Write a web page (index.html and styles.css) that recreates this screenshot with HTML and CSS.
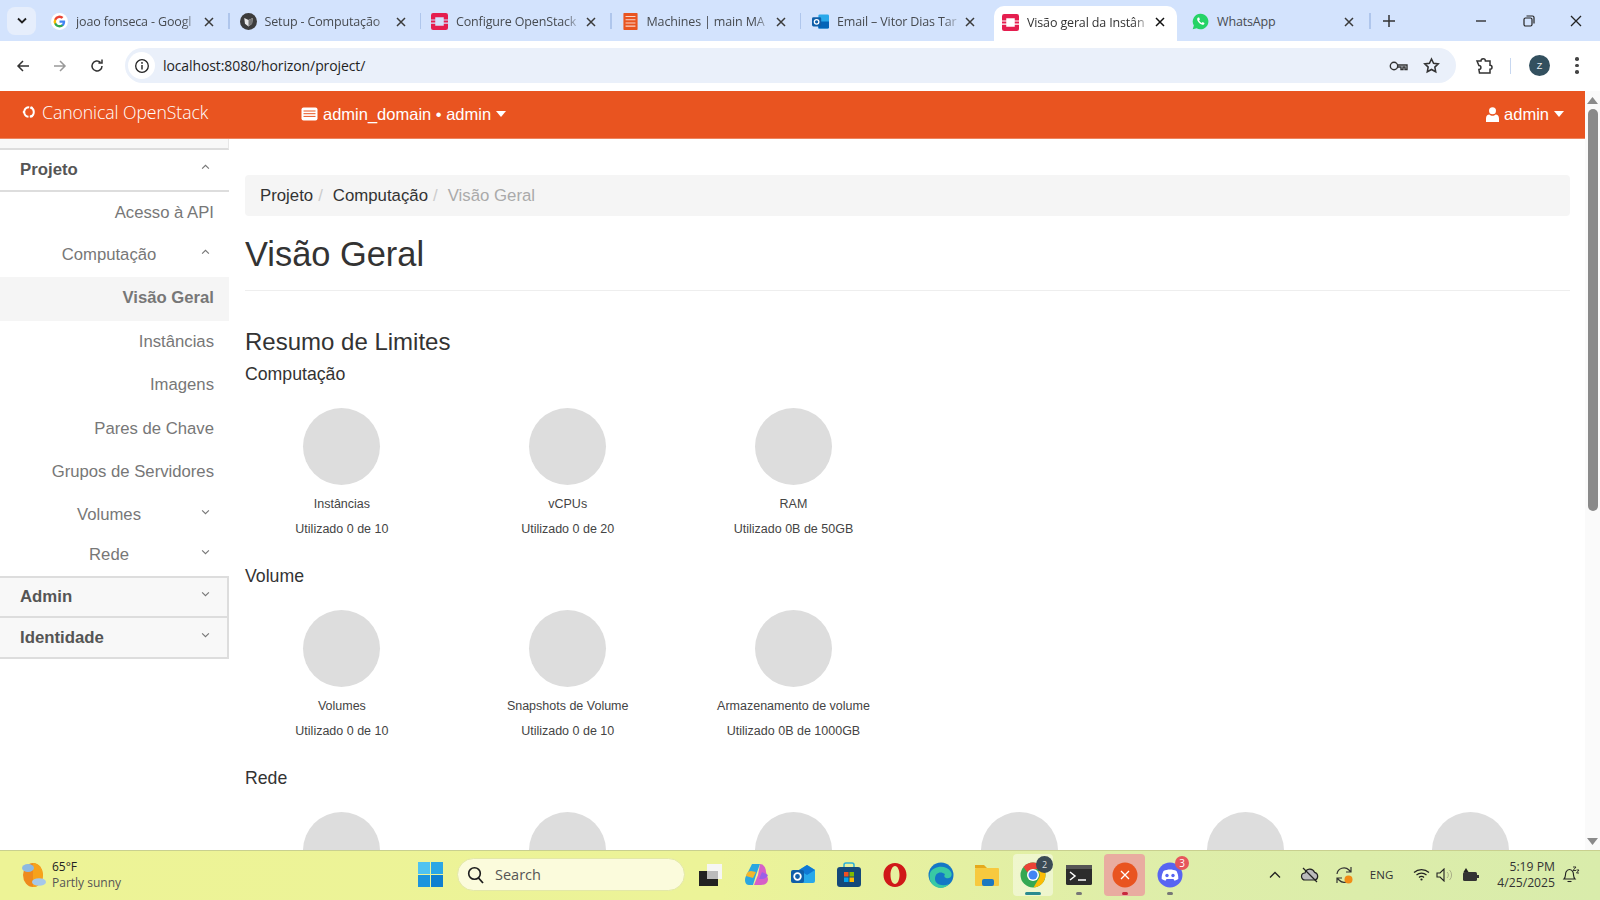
FILE: index.html
```html
<!DOCTYPE html>
<html lang="pt">
<head>
<meta charset="utf-8">
<title>Visão geral da Instância</title>
<link rel="stylesheet" href="styles.css">
</head>
<body>
<div class="tabstrip">
  <div class="tabsearch"><svg width="12" height="8" viewBox="0 0 12 8"><path d="M2 1.500l4 4 4-4" fill="none" stroke="#1f1f1f" stroke-width="1.800"/></svg></div>
  <div class="tab t1">
    <svg class="fav" viewBox="0 0 24 24"><circle cx="12" cy="12" r="12" fill="#fff"/><path d="M20 12.200c0-.6 0-1.100-.1-1.600H12v3h4.500a3.900 3.900 0 0 1-1.700 2.500v2.100h2.700c1.600-1.500 2.500-3.600 2.500-6z" fill="#4285f4"/><path d="M12 20.300c2.200 0 4.100-.7 5.500-2l-2.700-2.100c-.7.500-1.700.8-2.800.8-2.200 0-4-1.500-4.600-3.400H4.600v2.100a8.300 8.300 0 0 0 7.400 4.600z" fill="#34a853"/><path d="M7.400 13.600a5 5 0 0 1 0-3.200V8.300H4.600a8.300 8.300 0 0 0 0 7.400z" fill="#fbbc05"/><path d="M12 7c1.200 0 2.300.4 3.200 1.200l2.400-2.400A8.300 8.300 0 0 0 4.600 8.300l2.800 2.100C8 8.500 9.800 7 12 7z" fill="#ea4335"/></svg>
    <span class="tabtext">joao fonseca - Googl</span><svg class="x" viewBox="0 0 12 12"><path d="M2 2l8 8M10 2l-8 8"/></svg>
  </div><i class="sep"></i>
  <div class="tab t2">
    <svg class="fav" viewBox="0 0 24 24"><circle cx="12" cy="12" r="12" fill="#3c3c3c"/><path d="M6 7l6 3 6-3-1 8-5 4-5-4z" fill="#e8e8e8"/><path d="M12 10v9l5-4 1-8z" fill="#777"/></svg>
    <span class="tabtext">Setup - Computação</span><svg class="x" viewBox="0 0 12 12"><path d="M2 2l8 8M10 2l-8 8"/></svg>
  </div><i class="sep"></i>
  <div class="tab t3">
    <svg class="fav" viewBox="0 0 24 24"><path class="osred" d="M3 0h18a3 3 0 0 1 3 3v6h-6V6H6v3H0V3a3 3 0 0 1 3-3zM0 15h6v3h12v-3h6v6a3 3 0 0 1-3 3H3a3 3 0 0 1-3-3zM0 10.500h6v3H0zM18 10.500h6v3h-6z"/></svg>
    <span class="tabtext">Configure OpenStack</span><svg class="x" viewBox="0 0 12 12"><path d="M2 2l8 8M10 2l-8 8"/></svg>
  </div><i class="sep"></i>
  <div class="tab t4">
    <svg class="fav" viewBox="0 0 24 24"><rect x="2" width="20" height="24" rx="1" fill="#e95420"/><path d="M5 5h14M5 9.500h14M5 14h14M5 18.500h14" stroke="#fff" stroke-width="1.500" opacity=".75"/></svg>
    <span class="tabtext">Machines | main MA</span><svg class="x" viewBox="0 0 12 12"><path d="M2 2l8 8M10 2l-8 8"/></svg>
  </div><i class="sep"></i>
  <div class="tab t5">
    <svg class="fav" viewBox="0 0 24 24"><rect x="9" y="2" width="15" height="20" rx="2" fill="#28a8ea"/><path d="M9 12h15v8a2 2 0 0 1-2 2H9z" fill="#0364b8"/><rect y="6" width="13" height="13" rx="2" fill="#0f5ea8"/><circle cx="6.500" cy="12.500" r="3.200" fill="none" stroke="#fff" stroke-width="1.800"/></svg>
    <span class="tabtext">Email – Vitor Dias Tar</span><svg class="x" viewBox="0 0 12 12"><path d="M2 2l8 8M10 2l-8 8"/></svg>
  </div>
  <div class="tab active">
    <svg class="fav" viewBox="0 0 24 24"><path class="osred" d="M3 0h18a3 3 0 0 1 3 3v6h-6V6H6v3H0V3a3 3 0 0 1 3-3zM0 15h6v3h12v-3h6v6a3 3 0 0 1-3 3H3a3 3 0 0 1-3-3zM0 10.500h6v3H0zM18 10.500h6v3h-6z"/></svg>
    <span class="tabtext">Visão geral da Instân</span><svg class="x" viewBox="0 0 12 12"><path d="M2 2l8 8M10 2l-8 8"/></svg>
  </div>
  <div class="tab t7">
    <svg class="fav" viewBox="0 0 24 24"><path d="M12 1a11 11 0 0 0-9.400 16.600L1 23l5.600-1.500A11 11 0 1 0 12 1z" fill="#25d366"/><path d="M8.500 6.500c-1.500 1-1.800 3 0 5.500s4 4.200 6 4.500 3.300-1.200 3-2.500l-2.500-1.300-1.200 1.300c-1.500-.6-3-2-3.800-3.800l1.200-1.200-1-2.500z" fill="#fff"/></svg>
    <span class="tabtext plain">WhatsApp</span><svg class="x" viewBox="0 0 12 12"><path d="M2 2l8 8M10 2l-8 8"/></svg>
  </div><i class="sep"></i>
  <svg class="plus" width="14" height="14" viewBox="0 0 14 14"><path d="M7 1v12M1 7h12" stroke="#333" stroke-width="1.500"/></svg>
  <div class="winctl">
    <svg width="14" height="14" viewBox="0 0 14 14"><path d="M2 7h10" stroke="#222" stroke-width="1.300"/></svg>
    <svg width="14" height="14" viewBox="0 0 14 14"><rect x="2" y="4" width="8" height="8" rx="1.500" fill="none" stroke="#222" stroke-width="1.200"/><path d="M4.500 2h6a1.500 1.500 0 0 1 1.500 1.500v6" fill="none" stroke="#222" stroke-width="1.200"/></svg>
    <svg width="14" height="14" viewBox="0 0 14 14"><path d="M2 2l10 10M12 2L2 12" stroke="#222" stroke-width="1.300"/></svg>
  </div>
</div>
<div class="toolbar">
  <svg class="navico" viewBox="0 0 16 16"><path d="M14 8H3M8 3L3 8l5 5" fill="none" stroke="#333" stroke-width="1.500"/></svg>
  <svg class="navico" viewBox="0 0 16 16"><path d="M2 8h11M8 3l5 5-5 5" fill="none" stroke="#999" stroke-width="1.500"/></svg>
  <svg class="navico" viewBox="0 0 16 16"><path d="M13 8a5 5 0 1 1-1.600-3.700M13 1.500v3.600H9.400" fill="none" stroke="#333" stroke-width="1.500"/></svg>
  <div class="omnibox">
    <span class="infochip"><svg width="16" height="16" viewBox="0 0 16 16"><circle cx="8" cy="8" r="6.300" fill="none" stroke="#222" stroke-width="1.300"/><path d="M8 7v4.500" stroke="#222" stroke-width="1.400"/><circle cx="8" cy="4.900" r=".9" fill="#222"/></svg></span>
    <span class="url">localhost:8080/horizon/project/</span>
    <svg class="key" width="20" height="12" viewBox="0 0 20 12"><circle cx="5" cy="6" r="3.700" fill="none" stroke="#333" stroke-width="1.400"/><path d="M9 5h9v4.500h-2V7h-2v2.500h-2V7H9" fill="none" stroke="#333" stroke-width="1.400"/></svg>
    <svg class="star" width="17" height="17" viewBox="0 0 24 24"><path d="M12 2.800l2.900 6 6.600.9-4.800 4.600 1.200 6.500-5.900-3.200-5.900 3.200 1.200-6.500-4.800-4.600 6.600-.9z" fill="none" stroke="#333" stroke-width="2.200"/></svg>
  </div>
  <svg class="ext" width="20" height="20" viewBox="0 0 20 20"><path d="M3 5h4a2.200 2.200 0 0 1 4.400 0H16v4.300a2 2 0 0 1 0 4V17H5.500l-.6-3.500a2 2 0 0 0 0-4z" fill="none" stroke="#333" stroke-width="1.500"/></svg>
  <i class="tsep"></i>
  <span class="avatar">Z</span>
  <span class="dots"><i></i><i></i><i></i></span>
</div>
<div class="app">
  <div class="page">
    <nav class="topnav">
      <div class="brand"><svg width="14" height="14" viewBox="0 0 14 14"><circle cx="7" cy="7" r="4.800" fill="none" stroke="#fff" stroke-width="2" stroke-dasharray="6.500 1.400"/><circle cx="2" cy="7" r="1.300" fill="#fff"/><circle cx="9.500" cy="2.700" r="1.300" fill="#fff"/><circle cx="9.500" cy="11.300" r="1.300" fill="#fff"/></svg><span>Canonical OpenStack</span></div>
      <div class="project"><svg width="17" height="14" viewBox="0 0 17 14"><rect x=".5" y=".5" width="16" height="13" rx="2" fill="#fff"/><path d="M2.500 4h12M2.500 6.700h12M2.500 9.400h12" stroke="#e95420" stroke-width="1"/></svg><span>admin_domain • admin</span><i class="caret"></i></div>
      <div class="user"><svg width="13" height="15" viewBox="0 0 13 15"><circle cx="6.500" cy="3.800" r="3.500" fill="#fff"/><path d="M0 15v-3.500c0-2.500 1.500-4 3.300-4 1 .9 2 1.300 3.200 1.300s2.200-.4 3.200-1.300c1.800 0 3.300 1.500 3.300 4V15z" fill="#fff"/></svg><span>admin</span><i class="caret"></i></div>
    </nav>
    <div class="body">
      <aside class="side">
        <div class="side-top"></div>
        <div class="group open"><span>Projeto</span><svg class="chev" viewBox="0 0 8 5"><path d="M1 4l3-3 3 3"/></svg></div>
        <a class="item first">Acesso à API</a>
        <a class="item sub compute"><span>Computação</span><svg class="chev" viewBox="0 0 8 5"><path d="M1 4l3-3 3 3"/></svg></a>
        <a class="item current">Visão Geral</a>
        <a class="item">Instâncias</a>
        <a class="item">Imagens</a>
        <a class="item">Pares de Chave</a>
        <a class="item">Grupos de Servidores</a>
        <a class="item sub volumes"><span>Volumes</span><svg class="chev" viewBox="0 0 8 5"><path d="M1 1l3 3 3-3"/></svg></a>
        <a class="item sub rede"><span>Rede</span><svg class="chev" viewBox="0 0 8 5"><path d="M1 1l3 3 3-3"/></svg></a>
        <div class="group closed admin"><span>Admin</span><svg class="chev" viewBox="0 0 8 5"><path d="M1 1l3 3 3-3"/></svg></div>
        <div class="group closed"><span>Identidade</span><svg class="chev" viewBox="0 0 8 5"><path d="M1 1l3 3 3-3"/></svg></div>
      </aside>
      <main class="main">
        <ol class="crumbs"><li>Projeto</li><li>Computação</li><li class="here">Visão Geral</li></ol>
        <h1>Visão Geral</h1>
        <h2>Resumo de Limites</h2>
        <h3>Computação</h3>
        <div class="charts">
          <div class="chart"><div class="pie"></div><b>Instâncias</b><span>Utilizado 0 de 10</span></div>
          <div class="chart"><div class="pie"></div><b>vCPUs</b><span>Utilizado 0 de 20</span></div>
          <div class="chart"><div class="pie"></div><b>RAM</b><span>Utilizado 0B de 50GB</span></div>
        </div>
        <h3>Volume</h3>
        <div class="charts">
          <div class="chart"><div class="pie"></div><b>Volumes</b><span>Utilizado 0 de 10</span></div>
          <div class="chart"><div class="pie"></div><b>Snapshots de Volume</b><span>Utilizado 0 de 10</span></div>
          <div class="chart"><div class="pie"></div><b>Armazenamento de volume</b><span>Utilizado 0B de 1000GB</span></div>
        </div>
        <h3>Rede</h3>
        <div class="charts">
          <div class="chart"><div class="pie"></div></div>
          <div class="chart"><div class="pie"></div></div>
          <div class="chart"><div class="pie"></div></div>
          <div class="chart"><div class="pie"></div></div>
          <div class="chart"><div class="pie"></div></div>
          <div class="chart"><div class="pie"></div></div>
        </div>
      </main>
    </div>
  </div>
  <div class="scrollbar">
    <svg width="11" height="7" viewBox="0 0 11 7"><path d="M5.500 0L11 7H0z" fill="#8a8a8a"/></svg>
    <div class="thumb"></div>
    <div class="track"></div>
    <svg width="11" height="7" viewBox="0 0 11 7"><path d="M0 0h11L5.500 7z" fill="#8a8a8a"/></svg>
  </div>
</div>
<footer class="taskbar">
  <div class="weather">
    <svg width="28" height="26" viewBox="0 0 28 26"><ellipse cx="14" cy="13" rx="10" ry="12" fill="#ee8a1c"/><path d="M14 1a10 12 0 0 1 0 24z" fill="#f7a21a"/><ellipse cx="9" cy="6" rx="6" ry="4" fill="#8db9e2"/><ellipse cx="20" cy="20" rx="7" ry="3.800" fill="#a5c8ea"/></svg>
    <div class="wtext"><b>65°F</b><span>Partly sunny</span></div>
  </div>
  <div class="center">
    <svg class="win" width="25" height="25" viewBox="0 0 25 25"><rect width="12" height="12" fill="#4fc3f0"/><rect x="13" width="12" height="12" fill="#2ba7e6"/><rect y="13" width="12" height="12" fill="#1c95dd"/><rect x="13" y="13" width="12" height="12" fill="#0f7fd0"/></svg>
    <div class="search"><svg width="18" height="18" viewBox="0 0 18 18"><circle cx="7.500" cy="7.500" r="5.800" fill="none" stroke="#1c1c1c" stroke-width="1.600"/><path d="M11.500 12l4.500 5" stroke="#1c1c1c" stroke-width="1.800"/></svg><span>Search</span></div>
    <div class="tbicons">
      <span class="tbi"><svg width="26" height="26" viewBox="0 0 26 26"><rect x="9" y="2" width="15" height="15" fill="#f6f6f4"/><rect x="1" y="9" width="19" height="15" fill="#222"/><rect x="9" y="9" width="11" height="8" fill="#bbb"/></svg></span>
      <span class="tbi"><svg width="26" height="26" viewBox="0 0 26 26"><path d="M8 2h8l-4 11-3 10H5C1 23 0 18 2 14z" fill="#2aa7e0"/><path d="M16 2c4 0 6 4 6 8l2 7c0 4-3 6-7 6h-7l4-10z" fill="#d65fc7"/><path d="M7 9c-3 0-5 3-5 5l7 2 3-6z" fill="#f2b62c"/><path d="M18 17c3 0 5-2 6-4l-6-3-3 7z" fill="#9a5fe8"/></svg></span>
      <span class="tbi"><svg width="26" height="26" viewBox="0 0 26 26"><path d="M9 8l8-5 8 5v11a2 2 0 0 1-2 2H9z" fill="#28a8ea"/><path d="M9 8l8-5 8 5-8 5z" fill="#0f78d4"/><rect x="1" y="8" width="13" height="13" rx="2" fill="#0f5ea8"/><circle cx="7.500" cy="14.500" r="3.300" fill="none" stroke="#fff" stroke-width="1.800"/></svg></span>
      <span class="tbi"><svg width="26" height="26" viewBox="0 0 26 26"><path d="M8 5V3a2 2 0 0 1 2-2h6a2 2 0 0 1 2 2v2" fill="none" stroke="#2bb1d9" stroke-width="1.500"/><rect x="1" y="5" width="24" height="20" rx="3" fill="#14497a"/><rect x="8" y="10" width="4.500" height="4.500" fill="#f25022"/><rect x="13.500" y="10" width="4.500" height="4.500" fill="#7fba00"/><rect x="8" y="15.500" width="4.500" height="4.500" fill="#00a4ef"/><rect x="13.500" y="15.500" width="4.500" height="4.500" fill="#ffb900"/></svg></span>
      <span class="tbi"><svg width="26" height="26" viewBox="0 0 26 26"><path fill-rule="evenodd" d="M13 1c6.500 0 11.500 5.400 11.500 12S19.500 25 13 25 1.500 19.600 1.500 13 6.500 1 13 1zm0 3c-2.600 0-4.500 4-4.500 9s1.900 9 4.500 9 4.500-4 4.500-9-1.900-9-4.500-9z" fill="#d01818"/></svg></span>
      <span class="tbi"><svg width="26" height="26" viewBox="0 0 26 26"><circle cx="13" cy="13" r="12.500" fill="#1477c6"/><path d="M2 11C5 4 18 2 23 10c2 4-1 7-5 6-3-1-1-4-1-4-4-3-10-2-10 5 0 5 7 8 14 5-5 6-13 4-16 1-3-3-4-7-3-12z" fill="#38c9a4"/></svg></span>
      <span class="tbi"><svg width="26" height="26" viewBox="0 0 26 26"><path d="M1 3h9l3 3h-12z" fill="#e5a91c"/><rect x="1" y="6" width="24" height="18" rx="1" fill="#f7c93e"/><rect x="8" y="17" width="12" height="7" rx="2" fill="#1c78c0"/></svg></span>
      <span class="tbi chrome"><svg width="26" height="26" viewBox="0 0 26 26"><circle cx="13" cy="13" r="12.500" fill="#34a853"/><path d="M13 .5A12.500 12.500 0 0 1 24 7H13a6 6 0 0 0-5.500 3.500L3.500 5A12.500 12.500 0 0 1 13 .5z" fill="#ea4335"/><path d="M24 7a12.500 12.500 0 0 1-10.500 18.500L18.500 17A6 6 0 0 0 18 9z" fill="#fbbc05"/><circle cx="13" cy="13" r="6" fill="#fff"/><circle cx="13" cy="13" r="4.500" fill="#4285f4"/></svg><em class="zbadge">2</em><i class="run long"></i></span>
      <span class="tbi"><svg width="26" height="22" viewBox="0 0 26 22"><rect y="1" width="26" height="20" rx="1.500" fill="#2c2c2c"/><rect y="1" width="26" height="4" fill="#555"/><path d="M4 8l5 4-5 4" fill="none" stroke="#fff" stroke-width="1.500"/><path d="M12 16h8" stroke="#fff" stroke-width="1.500"/></svg><i class="run"></i></span>
      <span class="tbi vbox"><svg width="26" height="26" viewBox="0 0 26 26"><circle cx="13" cy="13" r="12.500" fill="#e95420"/><path d="M9 9l8 8M17 9l-8 8" stroke="#fff" stroke-width="1.300"/></svg><i class="run red"></i></span>
      <span class="tbi"><svg width="26" height="26" viewBox="0 0 26 26"><circle cx="13" cy="13" r="12.500" fill="#5865f2"/><path d="M6.500 9c4-2 9-2 13 0 1.300 2.500 2 5 1.800 8-1.200.9-2.500 1.400-3.800 1.800l-1-1.800h-7l-1 1.800c-1.300-.4-2.600-.9-3.800-1.800-.2-3 .5-5.500 1.800-8z" fill="#fff"/><circle cx="10" cy="13.500" r="1.700" fill="#5865f2"/><circle cx="16" cy="13.500" r="1.700" fill="#5865f2"/></svg><em class="rbadge">3</em><i class="run"></i></span>
    </div>
  </div>
  <div class="tray">
    <svg width="14" height="9" viewBox="0 0 14 9"><path d="M2 7.500l5-5 5 5" fill="none" stroke="#222" stroke-width="1.300"/></svg>
    <svg class="tr-cloud" width="20" height="16" viewBox="0 0 20 16"><path d="M5 13a3.500 3.500 0 0 1 0-7 5 5 0 0 1 9.500-.7A4 4 0 0 1 15 13z" fill="#bbb" stroke="#222" stroke-width="1.200"/><path d="M3 1l14 14" stroke="#222" stroke-width="1.300"/></svg>
    <span class="tr-sync"><svg width="20" height="20" viewBox="0 0 20 20"><path d="M3 9a7 7 0 0 1 12-4l2 2M17 2v5h-5M17 12a7 7 0 0 1-12 3l-2-2M3 18v-5h5" fill="none" stroke="#333" stroke-width="1.200"/><circle cx="14.500" cy="14.500" r="4" fill="#f28c16"/></svg></span>
    <span class="eng">ENG</span>
    <svg class="tr-wifi" width="17" height="13" viewBox="0 0 17 13"><path d="M1 4.500a11 11 0 0 1 15 0M3.500 7a7.500 7.500 0 0 1 10 0M6 9.500a3.500 3.500 0 0 1 5 0" fill="none" stroke="#222" stroke-width="1.200"/><circle cx="8.500" cy="11.500" r="1.100" fill="#222"/></svg>
    <svg class="tr-vol" width="18" height="14" viewBox="0 0 18 14"><path d="M1 5h3l4-4v12l-4-4H1z" fill="none" stroke="#222" stroke-width="1.100"/><path d="M11 4a4 4 0 0 1 0 6M13.500 2a7 7 0 0 1 0 10" fill="none" stroke="#aab088" stroke-width="1"/></svg>
    <svg class="tr-bat" width="18" height="14" viewBox="0 0 18 14"><rect x="1" y="4" width="14" height="9" rx="1.500" fill="#333"/><rect x="15" y="7" width="2" height="3" fill="#333"/><path d="M4 0L1.500 4h5z" fill="#222"/></svg>
    <div class="clock"><span>5:19 PM</span><span>4/25/2025</span></div>
    <svg class="bell" width="18" height="18" viewBox="0 0 18 18"><path d="M2 13c2-2 1-4 2-7 1-2 2-2.500 3.500-2.500S10 4 11 6c1 3 0 5 2 7z" fill="none" stroke="#222" stroke-width="1.100"/><path d="M5.500 15.500h4" stroke="#222" stroke-width="1.100"/><path d="M11 1h3l-3 3.500h3M14.500 4h2.500l-2.500 3H17" fill="none" stroke="#222" stroke-width=".9"/></svg>
  </div>
</footer>
</body>
</html>
```

FILE: styles.css
```css
* { box-sizing: border-box; }
html, body { margin: 0; height: 900px; overflow: hidden; }
body { display: flex; flex-direction: column; font-family: "Liberation Sans", Arial, sans-serif; color: #333; background: #fff; }

/* browser chrome */
.tabstrip { height: 41px; flex: none; background: #d3e3fd; display: flex; align-items: center; font-family: "Open Sans", "Noto Sans", sans-serif; font-size: 12.500px; color: #474b50; }
.tabsearch { width: 29px; height: 28px; margin-left: 7px; background: #e6eefc; border-radius: 8px; display: flex; align-items: center; justify-content: center; flex: none; }
.tab { display: flex; align-items: center; height: 41px; flex: none; padding-top: 2px; }
.fav { width: 17px; height: 17px; flex: none; margin-right: 8px; }
.tabtext { white-space: nowrap; flex: 1; min-width: 0; letter-spacing: -.15px; -webkit-mask-image: linear-gradient(90deg, #000 84%, transparent 98%); mask-image: linear-gradient(90deg, #000 84%, transparent 98%); }
.tabtext.plain { -webkit-mask-image: none; mask-image: none; }
.x { width: 12px; height: 12px; flex: none; }
.x path { fill: none; stroke: #3a3a3a; stroke-width: 1.500; }
.osred { fill: #e51e4f; }
.sep { width: 1.500px; height: 16px; background: #afc6ec; flex: none; }
.t1 { width: 192px; padding-left: 15px; padding-right: 13px; }
.t2 { width: 190px; padding-left: 10px; padding-right: 13px; }
.t3 { width: 189px; padding-left: 10px; padding-right: 13px; }
.t4 { width: 188px; padding-left: 10px; padding-right: 13px; }
.t5 { width: 193px; padding-left: 11px; padding-right: 18px; }
.active { width: 183px; height: 35px; margin-top: 6px; padding: 0 11px 3px 8px; background: #fff; border-radius: 10px 10px 0 0; color: #333; }
.active .x path { stroke: #111; }
.t7 { width: 192px; padding-left: 15px; padding-right: 14px; }
.plus { margin-left: 11px; flex: none; }
.winctl { margin-left: auto; width: 109px; margin-right: 17px; display: flex; justify-content: space-between; align-items: center; }

.toolbar { height: 49px; flex: none; background: #fff; border-radius: 10px 10px 0 0; display: flex; align-items: center; padding: 0 0 0 15px; }
.navico { width: 16px; height: 16px; margin-right: 21px; flex: none; }
.navico:nth-child(3) { margin-right: 20px; }
.omnibox { width: 1331px; height: 35px; background: #eaf0fa; border-radius: 18px; display: flex; align-items: center; padding-left: 3px; padding-right: 16px; flex: none; }
.infochip { width: 27px; height: 27px; border-radius: 50%; background: #fff; display: flex; align-items: center; justify-content: center; flex: none; }
.url { font-family: "Open Sans", "Noto Sans", sans-serif; font-size: 14px; color: #1f1f1f; margin-left: 8px; flex: 1; letter-spacing: -.1px; }
.key { margin-right: 14px; }
.ext { margin-left: 18px; flex: none; }
.tsep { width: 1px; height: 16px; background: #c7d7f0; margin-left: 16px; flex: none; }
.avatar { width: 21px; height: 21px; border-radius: 50%; background: #33505f; color: #e8eef0; font-size: 9px; display: flex; align-items: center; justify-content: center; margin-left: 18px; flex: none; }
.dots { display: flex; flex-direction: column; gap: 3px; margin-left: 25px; flex: none; }
.dots i { width: 3.500px; height: 3.500px; border-radius: 50%; background: #444; display: block; }

/* app */
.app { flex: 1; min-height: 0; display: flex; overflow: hidden; margin-top: 1px; }
.page { flex: 1; min-width: 0; }
.topnav { height: 48px; background: #e95420; color: #fff; display: flex; align-items: center; font-size: 16.500px; box-shadow: inset 0 -1px 0 #ec8560; }
.brand { font-family: "Open Sans", sans-serif; font-weight: 300; font-size: 17.700px; width: 301px; padding-left: 22px; margin-top: -6px; display: flex; align-items: center; gap: 6px; letter-spacing: -.1px; }
.project { display: flex; align-items: center; gap: 5px; margin-top: -2px; }
.user { margin-left: auto; margin-right: 21px; display: flex; align-items: center; gap: 5px; margin-top: -2px; }
.caret { width: 0; height: 0; border-left: 5.500px solid transparent; border-right: 5.500px solid transparent; border-top: 6px solid #fff; }
.body { display: flex; }

/* sidebar */
.side { width: 229px; flex: none; color: #6a6a6a; }
.side-top { height: 11px; background: #f8f8f8; border-right: 1px solid #e7e7e7; border-bottom: 2px solid #ddd; }
.group { height: 41px; display: flex; align-items: center; justify-content: space-between; padding: 0 19px 0 20px; font-size: 16.800px; font-weight: 700; color: #555; }
.group.open { border-bottom: 2px solid #ddd; height: 42px; }
.group.closed { background: #f8f8f8; border-bottom: 2px solid #ddd; border-right: 2px solid #ddd; padding-right: 17px; }
.group.admin { border-top: 2px solid #ddd; height: 42px; }
.chev { width: 9px; height: 6px; flex: none; margin-top: -6px; }
.chev path { fill: none; stroke: #777; stroke-width: 1; }
.item { height: 43.500px; display: flex; align-items: center; justify-content: flex-end; padding: 0 15px 2px 0; font-size: 16.700px; color: #777; }
.item.first { height: 43px; }
.item.sub { justify-content: space-between; padding-right: 19px; }
.item.sub span { width: 218px; text-align: center; }
.item.sub .chev { margin-left: -18px; }
.item.compute { height: 42px; }
.item.current { height: 44px; background: #f5f5f5; font-weight: 700; }
.item.volumes { height: 41px; }
.item.rede { height: 40px; }

/* main */
.main { flex: 1; min-width: 0; padding: 36px 15px 0 16px; }
.crumbs { list-style: none; margin: 0; padding: 0 15px; height: 41px; background: #f5f5f5; border-radius: 4px; display: flex; align-items: center; font-size: 16.800px; color: #333; }
.crumbs li + li::before { content: "/"; color: #ccc; padding: 0 10px 0 5px; }
.crumbs .here { color: #aaa; }
h1 { font-size: 34.400px; font-weight: 400; margin: 18px 0 0; height: 57px; border-bottom: 1px solid #eee; line-height: 40px; color: #333; }
h2 { font-size: 24px; font-weight: 400; margin: 37px 0 0; line-height: 27px; color: #333; }
h3 { font-size: 17.700px; font-weight: 400; margin: 9px 0 0; line-height: 20px; color: #333; }
.charts { display: flex; margin: 24px 0 0 -16px; height: 158px; }
.chart { width: 225.800px; flex: none; display: flex; flex-direction: column; align-items: center; font-size: 12.500px; color: #444; }
.pie { width: 77px; height: 77px; border-radius: 50%; background: #ddd; margin-bottom: 12px; flex: none; }
.chart b { font-weight: 400; line-height: 15px; }
.chart span { line-height: 15px; margin-top: 10px; }
.charts + h3 { margin-top: 0; }
.scrollbar { width: 15px; flex: none; background: #fafafa; display: flex; flex-direction: column; align-items: center; padding: 6px 0 5px; }
.thumb { width: 10px; height: 402px; background: #8a8a8a; border-radius: 5px; margin-top: 5px; flex: none; }
.track { flex: 1; }

/* taskbar */
.taskbar { height: 50px; flex: none; display: flex; align-items: center; padding-bottom: 2px; background: linear-gradient(90deg, #edf396 0%, #ecf398 45%, #dfeea9 70%, #d9ecab 100%); border-top: 1px solid #c9d08f; font-family: "Open Sans", "Noto Sans", sans-serif; color: #333; }
.weather { width: 418px; padding-left: 19px; display: flex; align-items: center; gap: 5px; flex: none; }
.wtext { display: flex; flex-direction: column; font-size: 12px; line-height: 16px; }
.wtext b { font-weight: 500; color: #222; }
.wtext span { color: #555; }
.center { display: flex; align-items: center; flex: none; }
.search { width: 228px; height: 33px; border-radius: 17px; margin-left: 14px; background: #fbfbdc; border: 1px solid #e3e8a8; display: flex; align-items: center; gap: 10px; padding-left: 9px; font-size: 14.500px; color: #555; }
.tbicons { display: flex; margin-left: 3px; }
.tbi { width: 46px; height: 42px; display: flex; align-items: center; justify-content: center; position: relative; flex: none; border-radius: 4px; }
.chrome { background: rgba(255,255,255,.45); width: 40px; margin: 0 3px; }
.vbox { background: #e9aca0; width: 41px; margin: 0 2px; }
.run { position: absolute; bottom: 1px; left: 50%; width: 6px; height: 3px; margin-left: -3px; border-radius: 2px; background: #777; }
.run.long { width: 16px; margin-left: -8px; background: #2a8a8f; }
.run.red { background: #c8283c; }
.zbadge { position: absolute; top: 2px; right: 0; width: 17px; height: 17px; border-radius: 50%; background: #3b4b55; color: #ddd; font-style: normal; font-size: 9px; display: flex; align-items: center; justify-content: center; }
.rbadge { position: absolute; top: 2px; right: 4px; width: 14px; height: 14px; border-radius: 50%; background: #e6565c; color: #fff; font-style: normal; font-size: 10px; display: flex; align-items: center; justify-content: center; }
.tray { margin-left: auto; display: flex; align-items: center; flex: none; padding-right: 20px; }
.tr-cloud { margin-left: 18px; }
.tr-sync { margin-left: 14px; display: flex; }
.eng { font-size: 11.500px; margin-left: 16px; color: #333; }
.tr-wifi { margin-left: 20px; }
.tr-vol { margin-left: 6px; }
.tr-bat { margin-left: 8px; }
.clock { display: flex; flex-direction: column; align-items: flex-end; font-size: 12.200px; line-height: 16px; margin-left: 17px; color: #333; }
.bell { margin-left: 7px; }
```
